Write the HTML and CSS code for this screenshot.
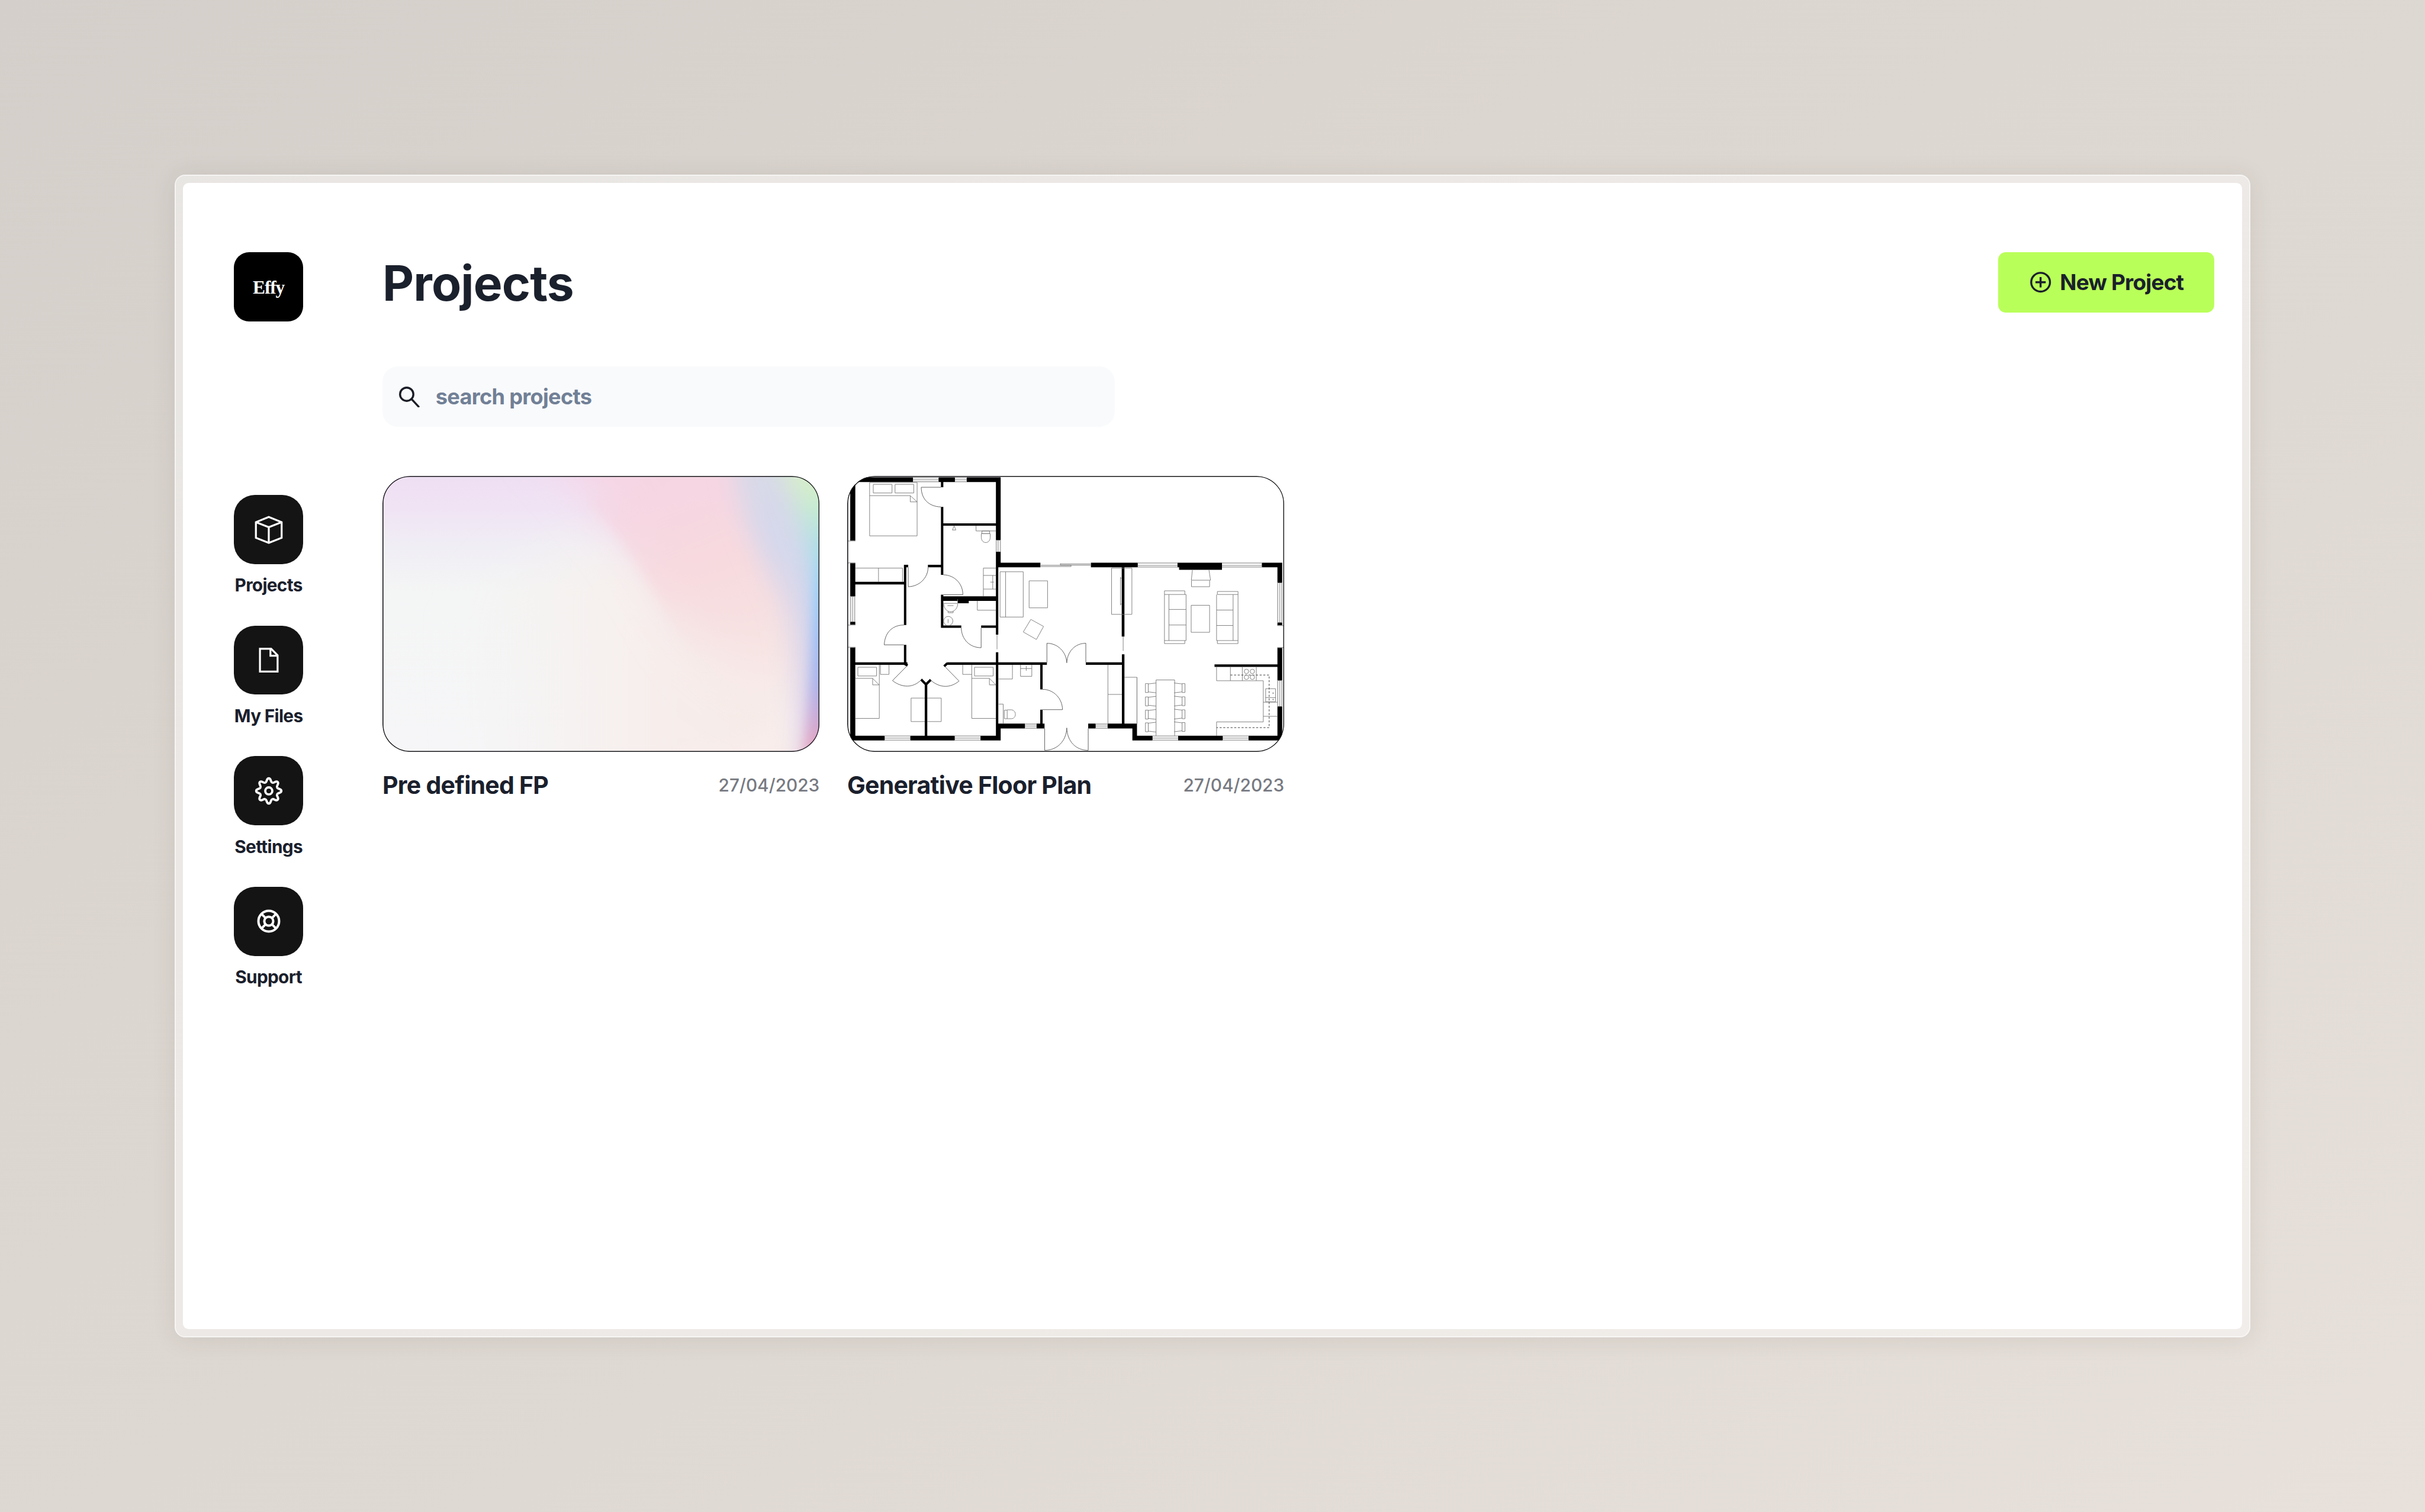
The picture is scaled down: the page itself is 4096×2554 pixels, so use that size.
FILE: index.html
```html
<!DOCTYPE html>
<html lang="en">
<head>
<meta charset="utf-8">
<title>Projects</title>
<link rel="stylesheet" href="styles.css">
</head>
<body>
<div class="frame">
  <div class="app">
    <aside class="sidebar">
      <div class="logo">Effy</div>
      <nav class="nav">
        <a class="nav-item">
          <span class="nav-button"><svg class="nav-icon" viewBox="0 0 72 72"><path d="M36 9 63 20V52.7L36 63.4 9 52.7V20ZM9 20 36 30.5 63 20M36 30.5V63"/></svg></span>
          <span class="nav-label">Projects</span>
        </a>
        <a class="nav-item">
          <span class="nav-button"><svg class="nav-icon" viewBox="0 0 72 72"><path d="M17.5 12.3H41L54.5 26V60H17.5ZM39.5 12.3V27H54.5"/></svg></span>
          <span class="nav-label">My Files</span>
        </a>
        <a class="nav-item">
          <span class="nav-button"><svg class="nav-icon nav-icon-settings" viewBox="-36 -36 72 72">
            <defs><path id="tooth" d="M-7.19-17.37C-3.2-19-5.2-26.4 0-26.4S3.2-19 7.19-17.37"/></defs>
            <use href="#tooth"/><use href="#tooth" transform="rotate(45)"/><use href="#tooth" transform="rotate(90)"/><use href="#tooth" transform="rotate(135)"/><use href="#tooth" transform="rotate(180)"/><use href="#tooth" transform="rotate(225)"/><use href="#tooth" transform="rotate(270)"/><use href="#tooth" transform="rotate(315)"/>
            <circle r="7.4"/></svg></span>
          <span class="nav-label">Settings</span>
        </a>
        <a class="nav-item">
          <span class="nav-button"><svg class="nav-icon nav-icon-support" viewBox="-36 -36 72 72"><circle r="21.7"/><circle r="9.4"/><path d="M-14.8-14.8-7-7M14.8-14.8 7-7M-14.8 14.8-7 7M14.8 14.8 7 7"/></svg></span>
          <span class="nav-label">Support</span>
        </a>
      </nav>
    </aside>
    <main class="main">
      <header class="header">
        <h1 class="title">Projects</h1>
        <button class="new-project">
          <svg class="plus-icon" viewBox="0 0 44 44"><circle cx="22" cy="22" r="19.7"/><path d="M22 11.2V32.8M11.2 22H32.8"/></svg>
          <span>New Project</span>
        </button>
      </header>
      <label class="search">
        <svg class="search-icon" viewBox="0 0 43 44"><circle cx="16.1" cy="16.1" r="14"/><path d="M26 26 41 42"/></svg>
        <input class="search-input" type="text" placeholder="search projects">
      </label>
      <section class="cards">
        <article class="card">
          <svg class="thumb" viewBox="0 0 917 579">
            <defs>
              <linearGradient id="base" x1="0" y1="0" x2="0" y2="1"><stop offset="0" stop-color="#efdff3"/><stop offset=".12" stop-color="#f0e4f4"/><stop offset=".26" stop-color="#f0eef5"/><stop offset=".42" stop-color="#f4f5f5"/><stop offset="1" stop-color="#f6f6f8"/></linearGradient>
              <linearGradient id="warm" x1="0" y1="0" x2="1" y2="0"><stop offset="0" stop-color="#f4f2ef" stop-opacity="0"/><stop offset=".5" stop-color="#f7efed"/><stop offset="1" stop-color="#f6e8e4"/></linearGradient>
              <linearGradient id="pink" x1="0" y1="0" x2=".3" y2="1"><stop offset="0" stop-color="#f6d3ec"/><stop offset=".3" stop-color="#f6d5e3"/><stop offset=".6" stop-color="#f7d9df"/><stop offset=".8" stop-color="#f7e1e1"/><stop offset="1" stop-color="#f8e9e7"/></linearGradient>
              <linearGradient id="crest" x1="0" y1="0" x2=".4" y2="1"><stop offset="0" stop-color="#f6d5e4" stop-opacity="0"/><stop offset=".25" stop-color="#f6d6e2" stop-opacity=".8"/><stop offset=".6" stop-color="#f7dade" stop-opacity=".7"/><stop offset="1" stop-color="#f8e4e2" stop-opacity="0"/></linearGradient>
              <linearGradient id="mist" x1="0" y1="0" x2="0" y2="1"><stop offset="0" stop-color="#dbdae4"/><stop offset=".35" stop-color="#d5d8ec"/><stop offset=".6" stop-color="#dcd6ea" stop-opacity=".85"/><stop offset="1" stop-color="#e6dcee" stop-opacity=".7"/></linearGradient>
              <linearGradient id="edge" gradientUnits="userSpaceOnUse" x1="0" y1="0" x2="0" y2="579"><stop offset="0" stop-color="#d9eecb"/><stop offset=".1" stop-color="#c9edcd"/><stop offset=".22" stop-color="#b0e3e2"/><stop offset=".42" stop-color="#98cff8"/><stop offset=".58" stop-color="#9cbff5"/><stop offset=".76" stop-color="#adb3ea"/><stop offset=".88" stop-color="#cdaad6"/><stop offset="1" stop-color="#e8a4be"/></linearGradient>
              <filter id="blur-s" filterUnits="userSpaceOnUse" x="-200" y="-200" width="1400" height="1100"><feGaussianBlur stdDeviation="12"/></filter>
              <filter id="blur-m" filterUnits="userSpaceOnUse" x="-200" y="-200" width="1400" height="1100"><feGaussianBlur stdDeviation="26"/></filter>
              <filter id="blur-l" filterUnits="userSpaceOnUse" x="-200" y="-200" width="1400" height="1100"><feGaussianBlur stdDeviation="48"/></filter>
            </defs>
            <rect width="917" height="579" fill="url(#base)"/>
            <path d="M160 300C260 160 400 130 490 150C570 190 620 360 860 470L900 680H200Z" fill="url(#warm)" filter="url(#blur-l)"/>
            <path d="M280-150C380-20 480 70 550 180C600 260 640 350 710 410C770 460 850 500 1050 530V-150Z" fill="url(#pink)" filter="url(#blur-l)"/>
            <path d="M430 50C500 120 545 200 580 260C620 340 670 400 730 440L840 420 760 100 600 0Z" fill="url(#crest)" filter="url(#blur-s)"/>
            <path d="M720-160C735 40 770 130 830 240C862 330 868 440 862 700H1050V-160Z" fill="url(#mist)" filter="url(#blur-m)"/>
            <path d="M640 570C740 590 810 560 835 480L838 680H600Z" fill="#f9eeec" filter="url(#blur-m)"/>
            <path d="M820-60C870 50 900 150 912 250C915 350 912 460 890 640H1050V-60Z" fill="url(#edge)" filter="url(#blur-m)"/>
            <path d="M918 120C908 260 908 400 884 640H1000V120Z" fill="url(#edge)" filter="url(#blur-s)"/>
            <rect class="outline" x="1" y="1" width="915" height="577" rx="57"/>
          </svg>
          <div class="caption"><h2 class="name">Pre defined FP</h2><time class="date">27/04/2023</time></div>
        </article>
        <article class="card">
          <svg class="thumb" viewBox="51 54 2751 1737">
            <!-- solid walls -->
            <path class="walls" d="M51 62H465V92H51ZM626 62H729V92H626ZM803 62H1017V92H803ZM70 62H102V462H70ZM70 602H102V812H70ZM70 972H102V992H70ZM70 1131H102V1719H70ZM987 62H1017V458H987ZM987 531H1017V629H987ZM987 600H1002V1053H987ZM987 1164H1002V1690H987ZM987 1613H1017V1719H987ZM641 92H656V125H641ZM641 249H656V676H641ZM641 801H656V1010H641ZM641 352H1000V367H641ZM559 613H656V629H559ZM408 613H435V629H408ZM102 720H423V737H102ZM408 613H423V992H408ZM408 1117H423V1243H408ZM641 811H1000V840H641ZM748 811H816V855H748ZM641 995H769V1010H641ZM894 995H1000V1010H894ZM1000 600H1267V629H1000ZM1585 600H1880V629H1585ZM2130 600H2410V645H2140V629H2130ZM2661 600H2789V629H2661ZM2759 600H2789V727H2759ZM2759 976H2789V996H2759ZM2759 1134H2789V1342H2759ZM2759 1505H2789V1719H2759ZM1779 629H1796V1065H1779ZM1780 1177H1796V1620H1780ZM102 1227H430V1243H102ZM680 1227H1308V1243H680ZM1553 1227H1796V1243H1553ZM2363 1240H2760V1256H2363ZM1266 1243H1281V1397H1266ZM1266 1525H1281V1613H1266ZM1002 1613H1170V1643H1002ZM1243 1613H1293V1643H1243ZM1568 1613H1615V1643H1568ZM1690 1613H1875V1643H1690ZM1846 1613H1875V1719H1846ZM70 1689H287V1719H70ZM448 1689H728V1719H448ZM890 1689H1017V1719H890ZM1846 1689H1973V1719H1846ZM2134 1689H2415V1719H2134ZM2577 1689H2789V1719H2577ZM539 1362H555V1690H539Z"/>
            <path class="stub" d="M516 1335 547 1366 577 1337M413 1237 431 1247M661 1252 682 1232"/>
            <!-- windows -->
            <path class="frame-line" d="M465 64H626M465 90H626M729 64H803M729 90H803M989 458V531M1015 458V531M72 812V972M98 812V972M1880 602H2130M1880 627H2130M2410 602H2661M2410 627H2661M2761 727V976M2787 727V976M2761 1342V1505M2787 1342V1505M1170 1616H1243M1170 1641H1243M1615 1616H1690M1615 1641H1690M287 1691H448M287 1717H448M728 1691H890M728 1717H890M1973 1691H2134M1973 1717H2134M2415 1691H2577M2415 1717H2577M1267 616H1460M1393 608H1585M55 463H102M55 601H102M55 992H102M55 1132H102M2759 996H2800M2759 1134H2800"/>
            <path class="line" d="M465 77H626M729 77H803M1001 458V531M85 812V972M1880 617H2130M2410 617H2661M2774 727V976M2774 1342V1505M1170 1628H1243M1615 1628H1690M287 1704H448M728 1704H890M1973 1704H2134M2415 1704H2577M1267 624H1460V616M1393 604V616H1585M994 1053V1145M1788 1065V1155"/>
            <!-- doors -->
            <path class="line door" d="M641 125H517C517 195 560 246 641 249M435 629V751C505 750 560 695 560 629M656 676C730 678 779 735 779 801H656M408 992C340 992 288 1035 284 1117H408M769 1010C770 1080 820 1135 894 1135V1010M430 1247 336 1342C395 1388 465 1390 516 1338M667 1255 755 1345C700 1390 635 1390 577 1340M1308 1227V1107C1375 1107 1430 1160 1433 1230C1436 1160 1485 1107 1553 1107V1227M1281 1397C1350 1397 1406 1455 1406 1525H1281M1294 1643V1781C1370 1781 1430 1725 1433 1640C1436 1725 1490 1781 1568 1781V1643"/>
            <!-- bedrooms -->
            <path class="line" d="M192 95H491V431H192ZM192 178H448L491 217H448V178M215 107H333V161H215ZM352 107H470V161H352ZM102 634H399V720M248 634V720M102 1328V1580H253V1243M102 1328H211L252 1369H211V1328M118 1258H236V1313H118ZM260 1243V1303H314V1243M539 1452H453V1600H539M555 1452H643V1600H555M835 1243V1580H987M835 1328H946L987 1369H946V1328M852 1258H970V1313H852ZM778 1243V1303H835"/>
            <!-- bathrooms -->
            <path class="line" d="M862 367V400H987M899 400H947V417H899ZM895 417V440C895 484 951 484 951 440V417ZM724 368 713 394H735ZM987 634H908V811M908 680H987M908 766H987M967 680V766M952 722H974M656 856H746V830M658 858C662 925 742 925 747 858M682 870H720M686 905V915H718V905M870 840V899H987M686 955V980M1091 1243V1332H1004M1142 1243V1315H1213V1243M1142 1266H1213M1178 1250V1280M1004 1490H1033V1613M1040 1528H1058V1582H1040ZM1058 1526H1085C1118 1530 1118 1580 1085 1582H1058"/>
            <circle class="line" cx="687" cy="967" r="29"/>
            <!-- living area -->
            <path class="line" d="M1013 657H1159V942H1013ZM1048 657V942M1196 714H1312V884H1196ZM1207 957 1287 1001 1242 1083 1159 1036ZM1715 634H1843V925H1715ZM1771 690V868M1771 697H1779M1771 860H1779M2224 645 2217 710H2338L2328 645M2218 712V751H2332V712M2048 777H2176V800H2048ZM2048 800V1109H2176V1090M2076 800V1090M2048 1090H2184V800H2176M2076 894H2184M2076 992H2184M2381 781H2511V1109H2381V1090M2381 781V800H2511M2376 800V1090H2511M2480 800V1090M2376 898H2480M2376 995H2480M2216 868H2332V1038H2216Z"/>
            <!-- dining and kitchen -->
            <path class="line" d="M1995 1689V1338H2112V1689M1875 1322V1613M1796 1321H1875V1613M1692 1243V1613M1692 1429H1780M2376 1256V1343H2670V1602H2376V1690M2463 1256V1343M2538 1256V1343M2626 1256V1343M2685 1393H2747V1475H2685ZM2685 1449H2747M2670 1478H2759M2670 1567H2759"/>
            <path class="dash" d="M2463 1307H2707V1638H2376"/>
            <g class="line"><circle cx="2564" cy="1284" r="14"/><circle cx="2601" cy="1284" r="14"/><circle cx="2564" cy="1321" r="14"/><circle cx="2601" cy="1321" r="14"/><circle cx="2732" cy="1421" r="3"/><circle cx="2732" cy="1461" r="3"/></g>
            <defs>
              <path id="seat" d="M0 4H18V60H0ZM18 6 68 0M18 56 68 62"/>
            </defs>
            <g class="line">
              <use href="#seat" x="1928" y="1357"/><use href="#seat" x="1928" y="1441"/><use href="#seat" x="1928" y="1524"/><use href="#seat" x="1928" y="1604"/>
              <g transform="matrix(-1 0 0 1 4105 0)"><use href="#seat" x="1928" y="1357"/><use href="#seat" x="1928" y="1440"/><use href="#seat" x="1928" y="1522"/><use href="#seat" x="1928" y="1602"/></g>
            </g>
            <rect class="outline outline-plan" x="54" y="57" width="2745" height="1731" rx="171"/>
          </svg>
          <div class="caption"><h2 class="name">Generative Floor Plan</h2><time class="date">27/04/2023</time></div>
        </article>
      </section>
    </main>
  </div>
</div>
</body>
</html>
```
FILE: styles.css
```css
* { box-sizing: border-box; margin: 0; padding: 0; }

/* 1rem is 1/50.88 of the window's width */
html { font-size: 1.965409vw; }

body {
  height: 100vh;
  display: flex;
  align-items: center;
  justify-content: center;
  overflow: hidden;
  background: linear-gradient(to bottom right, #d4cfca 0%, #dcd6d0 35%, #dfd9d3 60%, #e8e1db 100%);
  color: #1a202c;
  font-family: Inter, "Liberation Sans", sans-serif;
}

.frame {
  width: 43.54rem;
  height: 24.39rem;
  padding: .145rem;
  border: .025rem solid rgba(255, 255, 255, .75);
  border-radius: .22rem;
  background: rgba(255, 255, 255, .45);
  background-clip: padding-box;
  box-shadow: 0 .04rem .5rem rgba(60, 45, 35, .1);
}

.app {
  height: 100%;
  display: flex;
  border-radius: .12rem;
  background: #fff;
}

.sidebar {
  width: 4.185rem;
  padding: 1.455rem 0 0 1.07rem;
  display: flex;
  flex-direction: column;
  align-items: flex-start;
  gap: 3.645rem;
}

.logo {
  width: 1.45rem;
  height: 1.45rem;
  padding-top: .03rem;
  border-radius: .32rem;
  background: #000;
  color: #fff;
  display: flex;
  align-items: center;
  justify-content: center;
  font: 700 .39rem/1 "Liberation Serif", serif;
  letter-spacing: -.014rem;
}

.nav { display: flex; flex-direction: column; gap: .61rem; }

.nav-item {
  width: 1.45rem;
  display: flex;
  flex-direction: column;
  align-items: center;
  gap: .205rem;
}

.nav-item + .nav-item { margin-top: -.005rem; }

.nav-button {
  width: 1.45rem;
  height: 1.45rem;
  border-radius: .44rem;
  background: #141414;
  display: flex;
  align-items: center;
  justify-content: center;
}

.nav-icon {
  width: .72rem;
  height: .72rem;
  fill: none;
  stroke: #fff;
  stroke-width: 4;
}

.nav-icon-settings { stroke-width: 4.8; }
.nav-icon-support { stroke-width: 5; }

.nav-label {
  font-size: .37rem;
  font-weight: 650;
  line-height: .48rem;
  letter-spacing: -.0085rem;
  white-space: nowrap;
}

.main { flex: 1; padding: 1.455rem .58rem 0 0; }

.header {
  height: 1.27rem;
  display: flex;
  justify-content: space-between;
  align-items: flex-start;
}

.title {
  padding-top: .048rem;
  font-size: 1.02rem;
  font-weight: 650;
  line-height: 1.2rem;
  letter-spacing: -.011rem;
}

.new-project {
  width: 4.54rem;
  height: 1.27rem;
  padding-left: .68rem;
  display: flex;
  align-items: center;
  gap: .18rem;
  border: 0;
  border-radius: .16rem;
  background: #b9ff59;
  color: #1a202c;
  font: 650 .46rem/.6rem Inter, "Liberation Sans", sans-serif;
  letter-spacing: -.0105rem;
  white-space: nowrap;
}

.plus-icon {
  width: .44rem;
  height: .44rem;
  fill: none;
  stroke: #1a202c;
  stroke-width: 4.2;
}

.search {
  width: 15.36rem;
  height: 1.27rem;
  margin-top: 1.13rem;
  padding-left: .35rem;
  display: flex;
  align-items: center;
  gap: .335rem;
  border-radius: .32rem;
  background: #f9fafc;
}

.search-icon {
  width: .43rem;
  height: .44rem;
  fill: none;
  stroke: #1a1d26;
  stroke-width: 4.2;
  stroke-linecap: round;
}

.search-input {
  flex: 1;
  border: 0;
  outline: 0;
  background: none;
  font: 650 .45rem/.6rem Inter, "Liberation Sans", sans-serif;
  letter-spacing: -.009rem;
}

.search-input::placeholder { color: #718096; }

.cards { margin-top: 1.02rem; display: flex; gap: .58rem; }

.card { width: 9.17rem; }

.thumb {
  display: block;
  width: 9.17rem;
  height: 5.79rem;
  border-radius: .58rem;
  overflow: hidden;
}

.outline { fill: none; stroke: #16161a; stroke-width: 2; }
.outline-plan { stroke-width: 6; }

.walls { fill: #000; }
.stub { fill: none; stroke: #000; stroke-width: 15; }
.line { fill: none; stroke: #787878; stroke-width: 3.4; }
.door { stroke: #555; }
.frame-line { fill: none; stroke: #a8a8a8; stroke-width: 6; }
.dash { fill: none; stroke: #333; stroke-width: 3.5; stroke-dasharray: 13 10; }

.caption {
  margin-top: .398rem;
  display: flex;
  justify-content: space-between;
  line-height: .6rem;
  white-space: nowrap;
}

.name { font-size: .51rem; font-weight: 650; letter-spacing: -.0095rem; }
.date { font-size: .37rem; font-weight: 550; color: #777a82; }
```
